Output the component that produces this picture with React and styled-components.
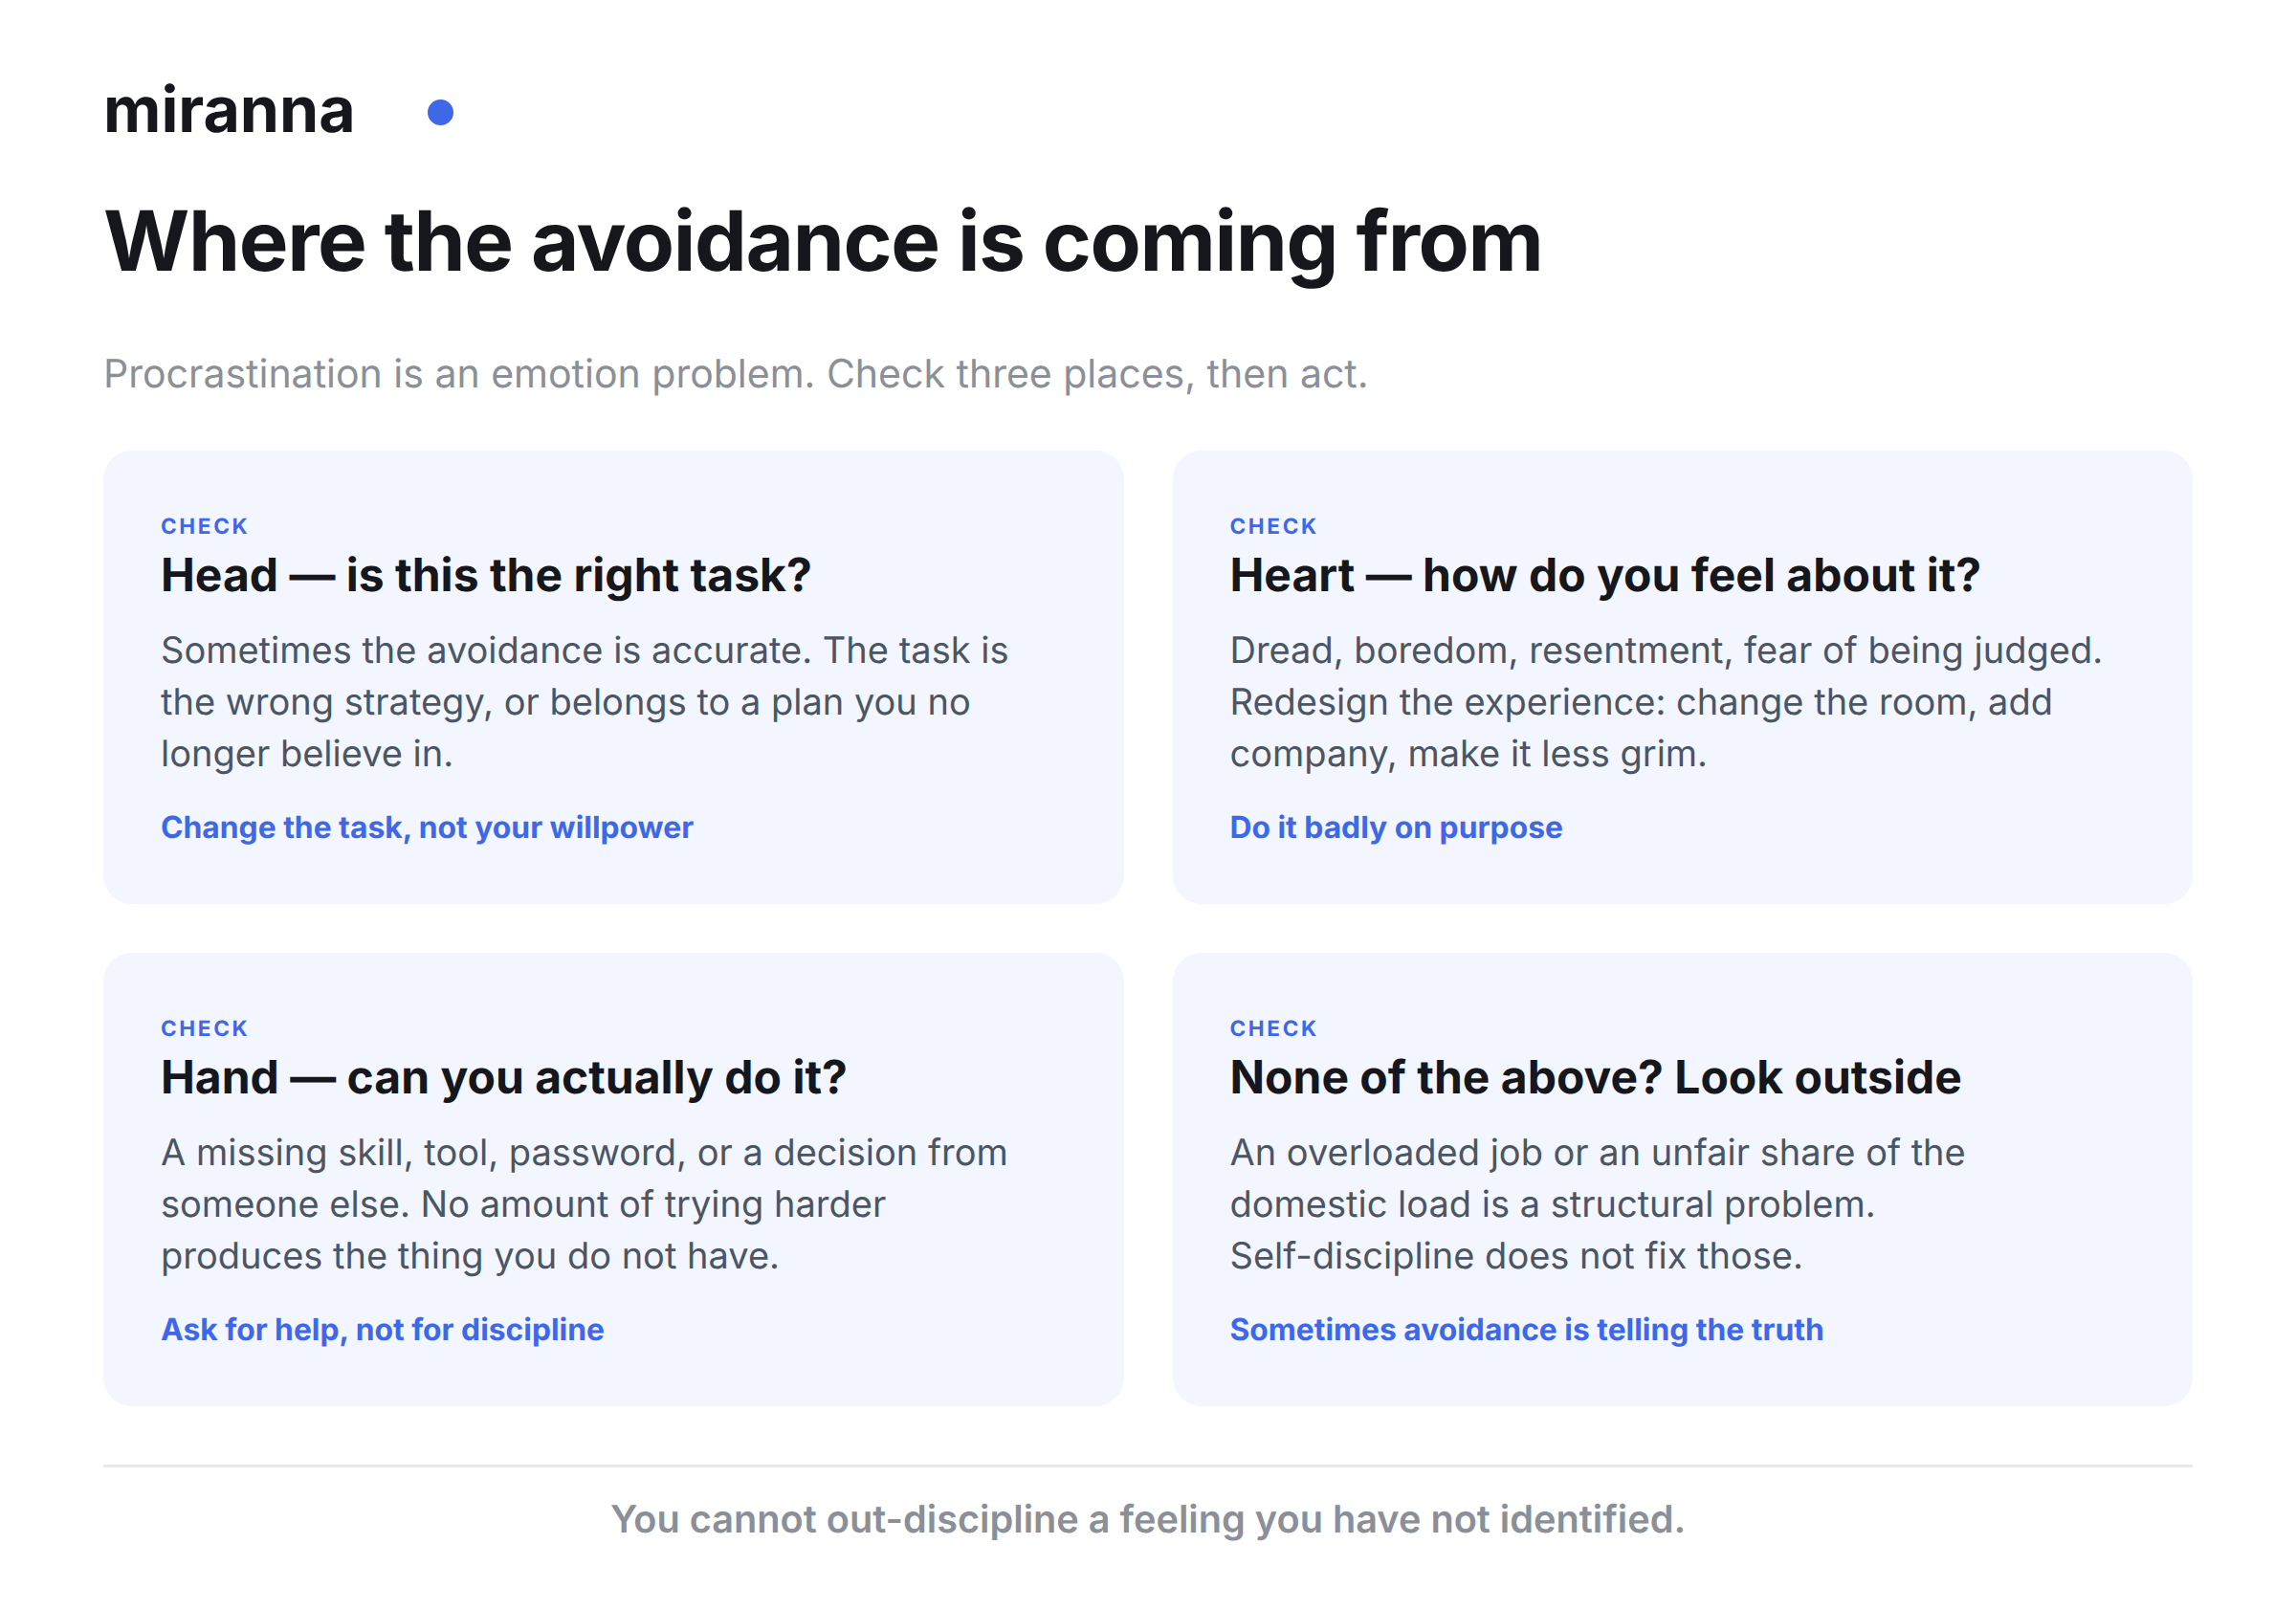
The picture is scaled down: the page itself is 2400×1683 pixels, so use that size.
import React from "react";
import styled, { createGlobalStyle } from "styled-components";

const GlobalStyle = createGlobalStyle`
  html, body {
    margin: 0;
    padding: 0;
    background: #ffffff;
  }
  body {
    font-family: Inter, "Liberation Sans", sans-serif;
    color: #16171c;
    text-rendering: geometricPrecision;
  }
`;

const Page = styled.div`
  box-sizing: border-box;
  width: 2400px;
  height: 1683px;
  padding: 72px 108px 0;
`;

const Brand = styled.div`
  display: flex;
  align-items: center;
  gap: 75px;
  height: 84px;
`;

const BrandName = styled.div`
  font-size: 66.2px;
  line-height: 84px;
  font-weight: 700;
`;

const BrandDot = styled.span`
  width: 27px;
  height: 27px;
  margin-top: 7px;
  border-radius: 50%;
  background: #3f68e8;
`;

const Title = styled.h1`
  margin: 42px 0 0;
  font-size: 87px;
  line-height: 108px;
  font-weight: 700;
  letter-spacing: -1.37px;
`;

const Subtitle = styled.p`
  margin: 57px 0 0;
  font-size: 41px;
  line-height: 54px;
  font-weight: 400;
  color: #8b8f98;
`;

const Grid = styled.div`
  display: grid;
  grid-template-columns: 1fr 1fr;
  gap: 51px;
  margin-top: 54px;
`;

const Card = styled.section`
  box-sizing: border-box;
  height: 474px;
  padding: 65px 60px 0;
  background: #f3f6fe;
  border-radius: 30px;
`;

const Label = styled.div`
  font-size: 22.5px;
  line-height: 30px;
  font-weight: 700;
  letter-spacing: 2.7px;
  color: #3f68e8;
`;

const CardTitle = styled.h2`
  margin: 5px 0 0;
  font-size: 48px;
  line-height: 60px;
  font-weight: 700;
`;

const CardBody = styled.p`
  margin: 22px 0 0;
  font-size: 38px;
  line-height: 54px;
  color: #4b5563;
`;

const CardLink = styled.div`
  margin-top: 26px;
  font-size: 31.8px;
  line-height: 48px;
  font-weight: 700;
  color: #3f68e8;
`;

const Footer = styled.footer`
  margin-top: 61px;
  border-top: 3px solid #e8e8ee;
  padding-top: 27px;
  text-align: center;
  font-size: 39.7px;
  line-height: 54px;
  font-weight: 600;
  color: #8b8f98;
`;

const checks = [
  {
    title: "Head — is this the right task?",
    lines: [
      "Sometimes the avoidance is accurate. The task is",
      "the wrong strategy, or belongs to a plan you no",
      "longer believe in.",
    ],
    link: "Change the task, not your willpower",
  },
  {
    title: "Heart — how do you feel about it?",
    lines: [
      "Dread, boredom, resentment, fear of being judged.",
      "Redesign the experience: change the room, add",
      "company, make it less grim.",
    ],
    link: "Do it badly on purpose",
  },
  {
    title: "Hand — can you actually do it?",
    lines: [
      "A missing skill, tool, password, or a decision from",
      "someone else. No amount of trying harder",
      "produces the thing you do not have.",
    ],
    link: "Ask for help, not for discipline",
  },
  {
    title: "None of the above? Look outside",
    lines: [
      "An overloaded job or an unfair share of the",
      "domestic load is a structural problem.",
      "Self-discipline does not fix those.",
    ],
    link: "Sometimes avoidance is telling the truth",
  },
];

export default function App() {
  return (
    <Page>
      <GlobalStyle />
      <Brand>
        <BrandName>miranna</BrandName>
        <BrandDot />
      </Brand>
      <Title>Where the avoidance is coming from</Title>
      <Subtitle>Procrastination is an emotion problem. Check three places, then act.</Subtitle>
      <Grid>
        {checks.map((check) => (
          <Card key={check.title}>
            <Label>CHECK</Label>
            <CardTitle>{check.title}</CardTitle>
            <CardBody>
              {check.lines.map((line) => (
                <React.Fragment key={line}>
                  {line}
                  <br />
                </React.Fragment>
              ))}
            </CardBody>
            <CardLink>{check.link}</CardLink>
          </Card>
        ))}
      </Grid>
      <Footer>You cannot out-discipline a feeling you have not identified.</Footer>
    </Page>
  );
}
